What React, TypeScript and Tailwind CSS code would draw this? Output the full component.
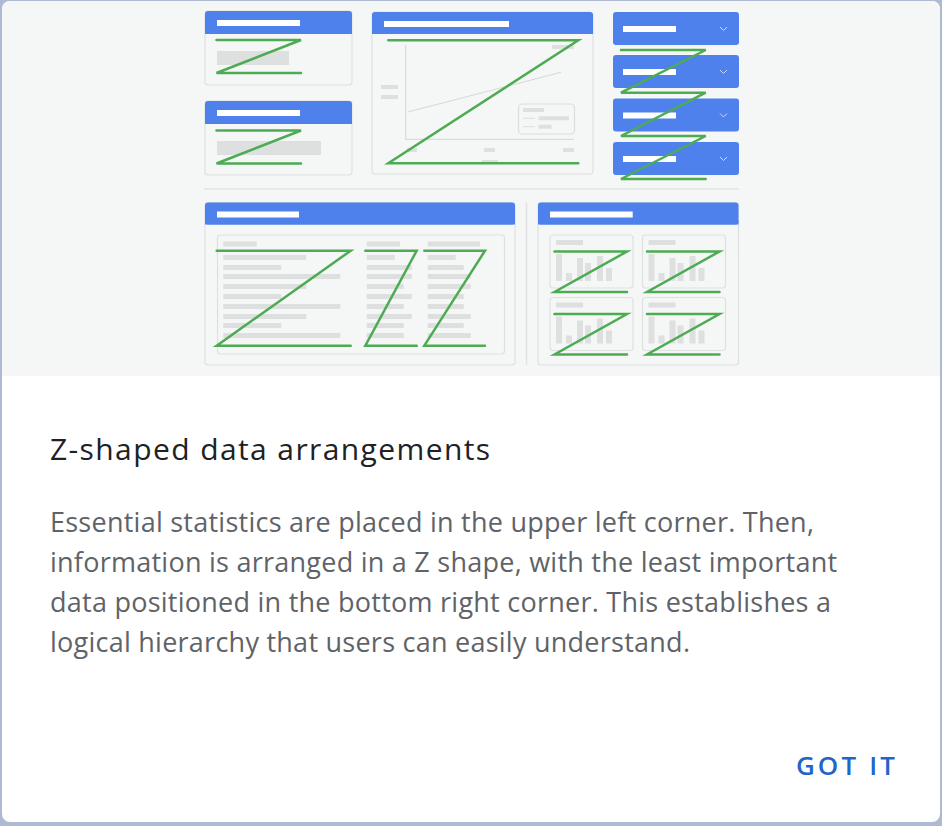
import React from 'react';

const BLUE = '#4f81ec';
const GREEN = '#4cab53';
const CARD_BG = '#f5f6f6';
const CARD_BORDER = '#dfe1e1';
const BAR = '#dedfdf';

// card with a blue header strip
const Card = ({ x, y, w, h, hh, barW }: { x: number; y: number; w: number; h: number; hh: number; barW: number }) => (
  <g>
    <rect x={x} y={y} width={w} height={h} rx={3} fill={CARD_BG} stroke={CARD_BORDER} strokeWidth={1.2} />
    <rect x={x} y={y} width={w} height={hh} rx={3} fill={BLUE} />
    <rect x={x} y={y + hh - 4} width={w} height={4} fill={BLUE} />
    <rect x={x + 12} y={y + 9} width={barW} height={6} fill="#ffffff" />
  </g>
);

const Dropdown = ({ y }: { y: number }) => (
  <g>
    <rect x={613} y={y} width={126} height={33} rx={3} fill={BLUE} />
    <rect x={623} y={y + 14} width={53} height={6} fill="#ffffff" />
    <path d={`M720 ${y + 15} l3.5 3.5 l3.5 -3.5`} fill="none" stroke="#cdd9fa" strokeWidth={1} />
  </g>
);

const MiniChart = ({ x, y }: { x: number; y: number }) => (
  <g>
    <rect x={x} y={y} width={83} height={53} rx={3} fill={CARD_BG} stroke={CARD_BORDER} strokeWidth={1.2} />
    <rect x={x + 6} y={y + 5} width={27} height={5} fill={BAR} />
    <rect x={x + 6} y={y + 19} width={6} height={27} fill={BAR} />
    <rect x={x + 16} y={y + 38} width={6} height={8} fill={BAR} />
    <rect x={x + 27} y={y + 23} width={6} height={23} fill={BAR} />
    <rect x={x + 35} y={y + 28} width={6} height={18} fill={BAR} />
    <rect x={x + 47} y={y + 21} width={6} height={25} fill={BAR} />
    <rect x={x + 56} y={y + 33} width={6} height={13} fill={BAR} />
    <path
      d={`M${x + 4.5} ${y + 16.5} H${x + 77} L${x + 4.5} ${y + 57} H${x + 77}`}
      fill="none"
      stroke={GREEN}
      strokeWidth={2.5}
      strokeLinecap="round"
    />
  </g>
);

const rowYs = [255, 265, 274, 284, 294, 304, 314, 323, 333];
const col1 = [83, 58, 117, 83, 58, 117, 83, 58, 117];
const col2 = [28, 45, 45, 37, 45, 37, 45, 37, 37];
const col3 = [28, 36, 43, 43, 36, 36, 43, 36, 43];

const Illustration = () => (
  <svg viewBox="2 1 938 375" className="block w-full h-full">
    <rect x={2} y={1} width={938} height={375} fill={CARD_BG} />

    {/* top left small cards */}
    <Card x={205} y={11} w={147} h={74} hh={23} barW={83} />
    <rect x={217} y={51} width={72} height={14} fill={BAR} />
    <path d="M216.5 40 H301 L216.5 73 H301" fill="none" stroke={GREEN} strokeWidth={2.5} strokeLinecap="round" />

    <Card x={205} y={101} w={147} h={74} hh={23} barW={83} />
    <rect x={217} y={141} width={104} height={14} fill={BAR} />
    <path d="M216.5 130.5 H301 L216.5 163.5 H301" fill="none" stroke={GREEN} strokeWidth={2.5} strokeLinecap="round" />

    {/* line chart card */}
    <Card x={372} y={12} w={221} h={162} hh={22} barW={125} />
    <path d="M405.7 45 V139.3 H574.3" fill="none" stroke="#dadcdc" strokeWidth={1.2} />
    <rect x={381} y={85} width={17} height={4} fill={BAR} />
    <rect x={381} y={95} width={17} height={4} fill={BAR} />
    <rect x={552} y={45} width={22} height={4} fill={BAR} />
    <path d="M407.7 112 L561 72.3" stroke="#d6d8d8" strokeWidth={1.1} fill="none" />
    <rect x={518.5} y={104} width={56} height={30} rx={4} fill="none" stroke="#dcdede" strokeWidth={1.2} />
    <rect x={523} y={108} width={21} height={4} fill={BAR} />
    <path d="M523 118.3 H535 M523 126.7 H535" stroke={BAR} strokeWidth={1} />
    <rect x={538.5} y={116.3} width={30.5} height={4} fill={BAR} />
    <rect x={538.5} y={124.7} width={13} height={4} fill={BAR} />
    <rect x={407} y={148} width={10} height={4} fill={BAR} />
    <rect x={484} y={148} width={11} height={4} fill={BAR} />
    <rect x={563} y={148} width={11} height={4} fill={BAR} />
    <rect x={482} y={160} width={16} height={4} fill={BAR} />
    <path d="M388.3 40.3 H578.3 L388.3 163.3 H578.3" fill="none" stroke={GREEN} strokeWidth={2.5} strokeLinecap="round" />

    {/* dropdown column */}
    <Dropdown y={12} />
    <Dropdown y={55} />
    <Dropdown y={98.5} />
    <Dropdown y={142} />
    <path
      d="M621 50 H705.7 L621 92.7 H705.7 L621 136 H705.7 L621 179 H705.7"
      fill="none"
      stroke={GREEN}
      strokeWidth={2.5}
      strokeLinecap="round"
    />

    {/* separator */}
    <path d="M204 189 H739" stroke="#e2e4e4" strokeWidth={1.5} />

    {/* table card */}
    <Card x={205} y={202.5} w={310} h={162.5} hh={22} barW={82} />
    <rect x={217.5} y={235} width={287} height={119} rx={3} fill="none" stroke={CARD_BORDER} strokeWidth={1.2} />
    <rect x={223.3} y={241.5} width={33.4} height={5} fill={BAR} />
    <rect x={366.7} y={241.5} width={33.3} height={5} fill={BAR} />
    <rect x={427.7} y={241.5} width={52.3} height={5} fill={BAR} />
    {rowYs.map((y, i) => (
      <g key={y}>
        <rect x={223.3} y={y} width={col1[i]} height={5} fill={BAR} />
        <rect x={366.7} y={y} width={col2[i]} height={5} fill={BAR} />
        <rect x={427.7} y={y} width={col3[i]} height={5} fill={BAR} />
      </g>
    ))}
    <path d="M216.7 250.7 H350.7 L216.7 345.7 H350.7" fill="none" stroke={GREEN} strokeWidth={2.5} strokeLinecap="round" />
    <path d="M365.3 250.7 H416.7 L365.3 345.7 H416.7" fill="none" stroke={GREEN} strokeWidth={2.5} strokeLinecap="round" />
    <path d="M424.3 250.7 H485 L424.3 345.7 H485" fill="none" stroke={GREEN} strokeWidth={2.5} strokeLinecap="round" />

    <path d="M526.5 202 V365" stroke="#e2e4e4" strokeWidth={1.5} />

    {/* bar chart card */}
    <Card x={538} y={202.5} w={200.5} h={162.5} hh={22} barW={82.7} />
    <MiniChart x={550} y={235} />
    <MiniChart x={642.5} y={235} />
    <MiniChart x={550} y={297.5} />
    <MiniChart x={642.5} y={297.5} />
  </svg>
);

export default function App() {
  return (
    <div className="h-[826px] w-full bg-[#aeb9d3] pt-[1px] px-[2px] pb-[4px]">
      <div className="h-full bg-white rounded-[8px] overflow-hidden flex flex-col font-['Open_Sans',sans-serif]">
        <div className="h-[375px] shrink-0">
          <Illustration />
        </div>
        <div className="flex-1 flex flex-col px-[48px] pt-[55px]">
          <h2 className="text-[30px] leading-[36px] font-medium tracking-[1.4px] text-[#202124]">
            Z-shaped data arrangements
          </h2>
          <p className="mt-[35px] text-[27px] leading-[40px] tracking-[0.25px] text-[#5f6368] max-w-[800px]">
            Essential statistics are placed in the upper left corner. Then, information is arranged in a Z shape,
            with the least important data positioned in the bottom right corner. This establishes a logical
            hierarchy that users can easily understand.
          </p>
          <div className="mt-auto mb-[33px] flex justify-end">
            <button className="h-[48px] pl-[8px] -mr-[6px] text-[26px] font-semibold tracking-[0.12em] text-[#2166c6]">
              GOT IT
            </button>
          </div>
        </div>
      </div>
    </div>
  );
}
